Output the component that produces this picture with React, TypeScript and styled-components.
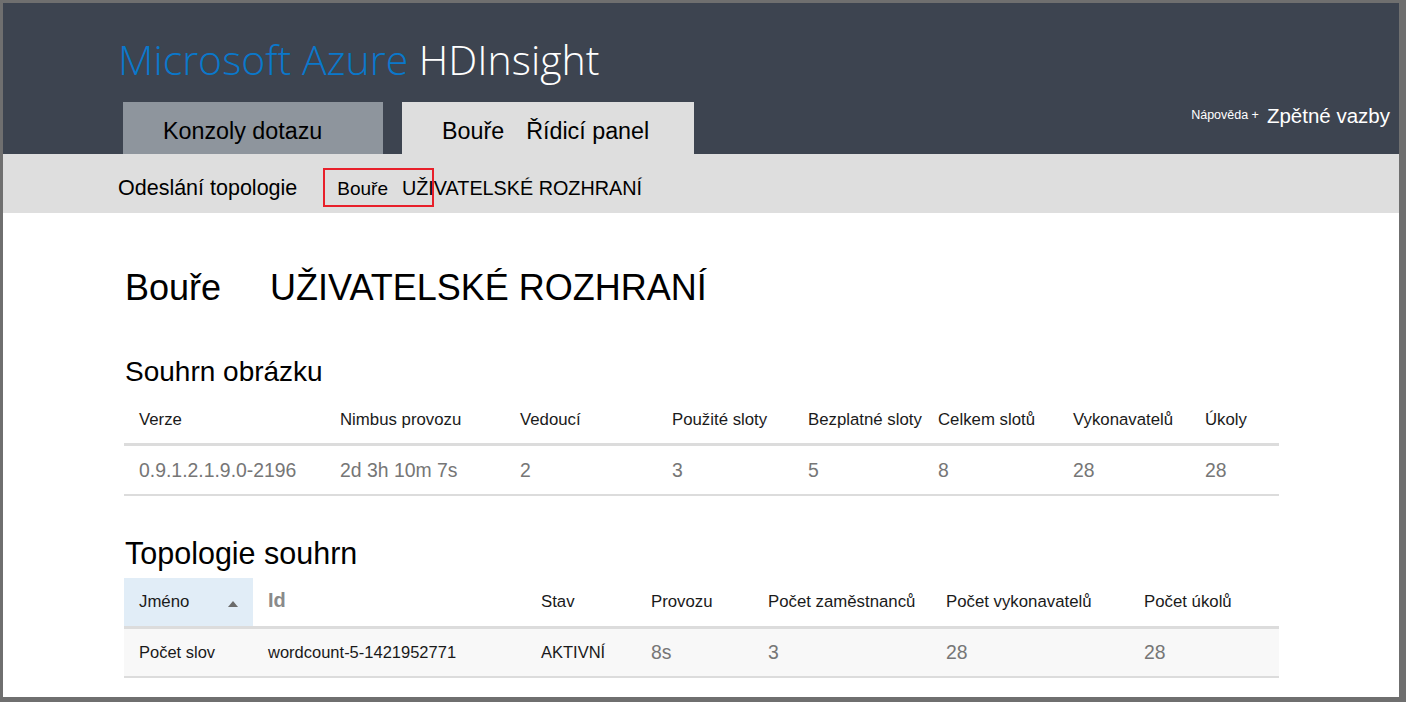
import React from "react";
import styled, { createGlobalStyle } from "styled-components";

const Global = createGlobalStyle`
  html, body { margin: 0; padding: 0; background: #6f6f6f; }
  body { font-family: "Liberation Sans", Arial, sans-serif; }
  * { box-sizing: border-box; }
`;

const Frame = styled.div`
  width: 1406px;
  height: 702px;
  border-style: solid;
  border-color: #6f6f6f;
  border-width: 3px 7px 5px 3px;
  background: #ffffff;
  display: flex;
  flex-direction: column;
  overflow: hidden;
`;

const Header = styled.header`
  background: #3d4450;
  height: 151px;
  padding-top: 30px;
  display: flex;
  flex-direction: column;
`;

const Logo = styled.div`
  padding-left: 115px;
  height: 52px;
  line-height: 52px;
  font-family: "Open Sans", "Liberation Sans", sans-serif;
  font-weight: 300;
  font-size: 41px;
  color: #ffffff;
  white-space: nowrap;
`;

const LogoBlue = styled.span`
  color: #0a78cb;
`;

const TabRow = styled.div`
  margin-top: 17px;
  padding-left: 120px;
  padding-right: 9px;
  display: flex;
  align-items: flex-end;
  gap: 19px;
  height: 52px;
`;

const Tab = styled.div<{ $active?: boolean; $w: number }>`
  width: ${(p) => p.$w}px;
  height: 52px;
  padding: 16px 0 0 40px;
  background: ${(p) => (p.$active ? "#dedede" : "#8e959d")};
  color: #000;
  font-size: 23.3px;
  line-height: 26px;
  white-space: nowrap;
`;

const Gap = styled.span<{ $w: number }>`
  display: inline-block;
  width: ${(p) => p.$w}px;
`;

const HelpLinks = styled.div`
  margin-left: auto;
  align-self: flex-start;
  padding-top: 2px;
  display: flex;
  align-items: baseline;
  gap: 8px;
  color: #ffffff;
  white-space: nowrap;
`;

const HelpSmall = styled.span`
  font-size: 12.5px;
  position: relative;
  top: -4px;
`;

const HelpBig = styled.span`
  font-size: 20.5px;
`;

const SubNav = styled.nav`
  background: #dedede;
  height: 59px;
  padding: 21px 0 0 115px;
  display: flex;
  align-items: baseline;
  color: #000;
  white-space: nowrap;
`;

const SubLink = styled.span`
  font-size: 21.5px;
  line-height: 26px;
`;

const Crumb = styled.span`
  position: relative;
  margin-left: 40px;
  display: inline-flex;
  align-items: baseline;
  gap: 14px;
`;

const CrumbSmall = styled.span`
  font-size: 19px;
`;

const CrumbBig = styled.span`
  font-size: 19.8px;
`;

const Highlight = styled.span`
  position: absolute;
  left: -14px;
  top: -9px;
  width: 111px;
  height: 39px;
  border: 2px solid #e8202a;
  pointer-events: none;
`;

const Content = styled.main`
  padding: 55px 0 0 121px;
  display: flex;
  flex-direction: column;
  width: 1276px;
`;

const PageTitle = styled.h1`
  margin: 0 0 0 1px;
  font-weight: 400;
  font-size: 36px;
  line-height: 40px;
  color: #000;
  white-space: nowrap;
  display: flex;
  gap: 49px;
`;

const SectionTitle = styled.h2<{ $size: number; $mt: number }>`
  margin: ${(p) => p.$mt}px 0 0 1px;
  font-weight: 400;
  font-size: ${(p) => p.$size}px;
  line-height: 36px;
  color: #000;
`;

const Table = styled.div<{ $cols: string }>`
  margin-top: 7px;
  width: 1155px;
  display: grid;
  grid-template-columns: ${(p) => p.$cols};
`;

const HeadCell = styled.div<{ $h: number; $sorted?: boolean }>`
  height: ${(p) => p.$h}px;
  padding-left: 15px;
  display: flex;
  align-items: center;
  font-size: 16.8px;
  color: #1a1a1a;
  white-space: nowrap;
  background: ${(p) => (p.$sorted ? "#e1edf7" : "transparent")};
  border-bottom: 3px solid #dcdcdc;
  box-sizing: content-box;
`;

const IdHead = styled.span`
  font-weight: 700;
  font-size: 20px;
  color: #8a8a8a;
  margin-top: -4px;
`;

const SortIcon = styled.svg`
  margin-left: auto;
  margin-right: 15px;
  margin-top: 4px;
`;

const Cell = styled.div<{ $h: number; $muted?: boolean; $bg?: string }>`
  height: ${(p) => p.$h}px;
  padding-left: 15px;
  display: flex;
  align-items: center;
  white-space: nowrap;
  font-size: ${(p) => (p.$muted ? "19.4px" : "16.5px")};
  color: ${(p) => (p.$muted ? "#767676" : "#1a1a1a")};
  background: ${(p) => p.$bg || "transparent"};
  border-bottom: 2px solid #dcdcdc;
  box-sizing: content-box;
`;

const summaryHead = [
  "Verze",
  "Nimbus provozu",
  "Vedoucí",
  "Použité sloty",
  "Bezplatné sloty",
  "Celkem slotů",
  "Vykonavatelů",
  "Úkoly",
];
const summaryVals = ["0.9.1.2.1.9.0-2196", "2d 3h 10m 7s", "2", "3", "5", "8", "28", "28"];

const topoHead = ["Jméno", "Id", "Stav", "Provozu", "Počet zaměstnanců", "Počet vykonavatelů", "Počet úkolů"];
const topoVals: { t: string; muted?: boolean }[] = [
  { t: "Počet slov" },
  { t: "wordcount-5-1421952771" },
  { t: "AKTIVNÍ" },
  { t: "8s", muted: true },
  { t: "3", muted: true },
  { t: "28", muted: true },
  { t: "28", muted: true },
];

export default function App() {
  return (
    <>
      <Global />
      <Frame>
        <Header>
          <Logo>
            <LogoBlue>Microsoft Azure</LogoBlue> HDInsight
          </Logo>
          <TabRow>
            <Tab $w={260}>Konzoly dotazu</Tab>
            <Tab $w={292} $active>
              Bouře<Gap $w={22} />Řídicí panel
            </Tab>
            <HelpLinks>
              <HelpSmall>Nápověda +</HelpSmall>
              <HelpBig>Zpětné vazby</HelpBig>
            </HelpLinks>
          </TabRow>
        </Header>
        <SubNav>
          <SubLink>Odeslání topologie</SubLink>
          <Crumb>
            <CrumbSmall>Bouře</CrumbSmall>
            <CrumbBig>UŽIVATELSKÉ ROZHRANÍ</CrumbBig>
            <Highlight />
          </Crumb>
        </SubNav>
        <Content>
          <PageTitle>
            <span>Bouře</span>
            <span>UŽIVATELSKÉ ROZHRANÍ</span>
          </PageTitle>
          <SectionTitle $size={28} $mt={46}>
            Souhrn obrázku
          </SectionTitle>
          <Table $cols="201px 180px 152px 136px 130px 135px 132px 89px">
            {summaryHead.map((h) => (
              <HeadCell key={h} $h={46}>
                {h}
              </HeadCell>
            ))}
            {summaryVals.map((v, i) => (
              <Cell key={i} $h={48} $muted>
                {v}
              </Cell>
            ))}
          </Table>
          <SectionTitle $size={30.5} $mt={39}>
            Topologie souhrn
          </SectionTitle>
          <Table $cols="129px 273px 110px 117px 178px 198px 150px">
            {topoHead.map((h, i) => (
              <HeadCell key={h} $h={48} $sorted={i === 0}>
                {i === 1 ? <IdHead>{h}</IdHead> : h}
                {i === 0 && (
                  <SortIcon width="10" height="6" viewBox="0 0 10 6">
                    <path d="M5 0 L10 6 L0 6 Z" fill="#6b6b6b" />
                  </SortIcon>
                )}
              </HeadCell>
            ))}
            {topoVals.map((v, i) => (
              <Cell key={i} $h={47} $muted={v.muted} $bg="#f8f8f8">
                {v.t}
              </Cell>
            ))}
          </Table>
        </Content>
      </Frame>
    </>
  );
}
